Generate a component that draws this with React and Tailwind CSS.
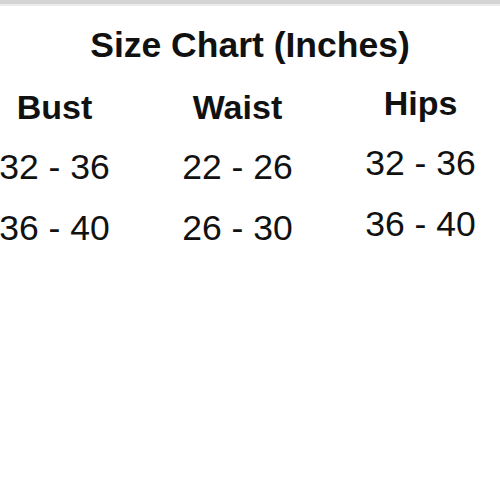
export default function App() {
  const cols = [
    { h: "Bust", v: ["32 - 36", "36 - 40"], shift: "" },
    { h: "Waist", v: ["22 - 26", "26 - 30"], shift: "" },
    { h: "Hips", v: ["32 - 36", "36 - 40"], shift: "-mt-[4px]" },
  ];
  return (
    <div
      className="w-[500px] h-[500px] bg-white overflow-hidden text-[#111]"
      style={{ fontFamily: '"Liberation Sans", Arial, sans-serif' }}
    >
      <div className="h-[4px] bg-[#d4d4d4]" />
      <div className="h-[2px] bg-[#ececec]" />
      <div className="pt-[19px] text-center text-[35.5px] leading-[40px] font-bold">
        Size Chart (Inches)
      </div>
      <div className="mt-[22px] ml-[-37px] flex">
        {cols.map((c) => (
          <div key={c.h} className={`w-[183px] shrink-0 flex flex-col items-center ${c.shift}`}>
            <div className="text-[34px] leading-[40px] font-bold">{c.h}</div>
            <div className="mt-[20px] text-[35.5px] leading-[40px]">{c.v[0]}</div>
            <div className="mt-[21px] text-[35.5px] leading-[40px]">{c.v[1]}</div>
          </div>
        ))}
      </div>
    </div>
  );
}
